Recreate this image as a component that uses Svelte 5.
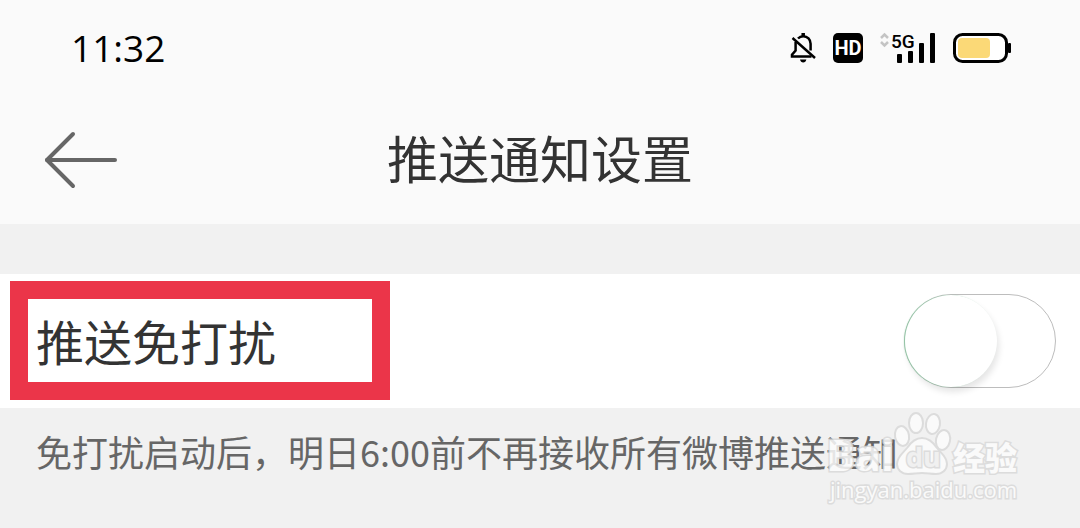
<script>
  let time = "11:32";
  let muted = false;
</script>

<main>
  <div class="status">
    <span class="time">{time}</span>
    <div class="icons">
      <svg class="bell" width="26" height="32" viewBox="0 0 26 32" fill="none" stroke="#000" stroke-width="2.500">
        <path d="M8 6.500C9.400 5 11.200 4.200 13.200 4.200c4.300 0 7.400 3.300 7.400 7.600v6.700" />
        <path d="M5.600 10v8.500L2 22.800v1.700h19.500" />
        <path d="M2.500 6L25 26" stroke-width="2.500" />
        <path d="M13.200 1v3" stroke-width="3.500" />
        <path d="M10 27.500h6.400c-.4 2-1.600 3-3.200 3s-2.800-1-3.200-3z" fill="#000" stroke="none" />
      </svg>
      <span class="hd">HD</span>
      <svg class="signal" width="56" height="32" viewBox="0 0 56 32">
        <g fill="none" stroke="#c4c4c4" stroke-width="2.500">
          <path d="M1 6l3.500-3.500L8 6" />
          <path d="M1 10l3.500 3.500L8 10" />
        </g>
        <text x="11" y="16">5G</text>
        <rect x="17" y="22" width="5" height="9" rx="1" />
        <rect x="28" y="19" width="5" height="12" rx="1" />
        <rect x="39" y="11" width="5" height="20" rx="1" />
        <rect x="50" y="1" width="5" height="30" rx="1" />
      </svg>
      <svg class="battery" width="58" height="32" viewBox="0 0 58 32">
        <rect x="1.500" y="2.500" width="52" height="27" rx="8" fill="#fff" stroke="#000" stroke-width="3" />
        <rect x="5" y="6" width="32" height="20" rx="4" fill="#fbd977" />
        <rect x="55" y="11" width="3" height="10" rx="1" />
      </svg>
    </div>
  </div>

  <header>
    <button class="back" aria-label="返回">
      <svg width="74" height="58" viewBox="0 0 74 58" fill="none" stroke="#666" stroke-width="4" stroke-linecap="round" stroke-linejoin="round">
        <path d="M29 3L3 29l26 26" />
        <path d="M3 29h68" />
      </svg>
    </button>
    <h1>推送通知设置</h1>
  </header>

  <section class="row">
    <label for="mute">推送免打扰</label>
    <input id="mute" type="checkbox" role="switch" bind:checked={muted} />
  </section>

  <div class="hint">
    <p>免打扰启动后，明日6:00前不再接收所有微博推送通知</p>
    <svg class="mark" width="200" height="104" viewBox="0 0 200 104">
      <text class="brand" x="2" y="61">Bai</text>
      <g class="paw">
        <ellipse cx="78" cy="26" rx="7" ry="10" transform="rotate(-10 78 26)" />
        <ellipse cx="92" cy="13" rx="7" ry="10" />
        <ellipse cx="109" cy="14" rx="7" ry="10" transform="rotate(8 109 14)" />
        <ellipse cx="119" cy="30" rx="7" ry="10" transform="rotate(12 119 30)" />
        <path d="M98 28c7 0 11 4 15 10 4 5 10 9 10 16 0 6-5 10-11 10-5 0-9-1-14-1s-9 1-14 1c-6 0-11-4-11-10 0-7 6-11 10-16 4-6 8-10 15-10z" />
      </g>
      <text class="du" x="82" y="57">du</text>
      <text class="cn" x="129" y="60">经验</text>
      <text class="site" x="6" y="88">jingyan.baidu.com</text>
    </svg>
  </div>
</main>

<style>
  :global(body) {
    background: #f1f1f1;
  }

  main {
    font-family: "Noto Sans CJK SC", sans-serif;
    color: #333;
  }

  .status {
    display: flex;
    align-items: center;
    justify-content: space-between;
    height: 96px;
    padding: 0 69px 0 71px;
    background: #fafafa;
  }

  .time {
    font: 400 37px/40px "Open Sans", sans-serif;
    color: #000;
  }

  .icons {
    display: flex;
    align-items: center;
    gap: 17px;
  }

  .hd {
    width: 30px;
    border-radius: 5px;
    background: #000;
    color: #fff;
    font: 700 20px/30px Roboto, sans-serif;
    text-align: center;
  }

  .signal {
    overflow: visible;
  }

  .signal text {
    font: 500 19px Roboto, sans-serif;
  }

  header {
    display: grid;
    grid-template-columns: 1fr auto 1fr;
    align-items: center;
    height: 128px;
    padding: 0 44px;
    background: #fafafa;
  }

  .back {
    justify-self: start;
    padding: 0;
    border: 0;
    background: none;
  }

  .back svg {
    display: block;
  }

  h1 {
    margin: 0;
    padding-bottom: 6px;
    font-size: 51px;
    font-weight: 400;
    line-height: 76px;
  }

  .row {
    display: flex;
    align-items: center;
    justify-content: space-between;
    margin-top: 50px;
    padding: 7px 24px 8px 10px;
    background: #fff;
  }

  label {
    padding: 0 96px 0 8px;
    border: 18px solid #eb3549;
    font-size: 48px;
    line-height: 83px;
  }

  input {
    appearance: none;
    width: 152px;
    height: 94px;
    margin: 0;
    border: 1px solid #bdbdbd;
    border-radius: 47px;
    background: #fff;
  }

  input::before {
    content: "";
    display: block;
    width: 92px;
    height: 92px;
    border-radius: 50%;
    background: #fff;
    box-shadow: -1px 0 1px #8fc5a3, 2px 5px 6px rgba(0, 0, 0, 0.1);
    transition: margin 0.2s;
  }

  input:checked::before {
    margin-left: 58px;
  }

  .hint {
    position: relative;
    padding: 16px 36px 50px;
  }

  p {
    margin: 0;
    color: #666;
    font-size: 36px;
    line-height: 54px;
  }

  .mark {
    position: absolute;
    top: 2px;
    right: 56px;
    fill: #fcfcfc;
    stroke: #d9d9d9;
    stroke-width: 2px;
    opacity: 0.85;
  }

  .mark text {
    paint-order: stroke;
    stroke-width: 3px;
  }

  .brand {
    font: 700 43px "Open Sans", sans-serif;
  }

  .mark .du {
    fill: #f0f0f0;
    font: 700 27px "Open Sans", sans-serif;
  }

  .cn {
    font: 900 32px "Noto Sans CJK SC", sans-serif;
  }

  .site {
    font: 400 22px "Open Sans", sans-serif;
  }
</style>
